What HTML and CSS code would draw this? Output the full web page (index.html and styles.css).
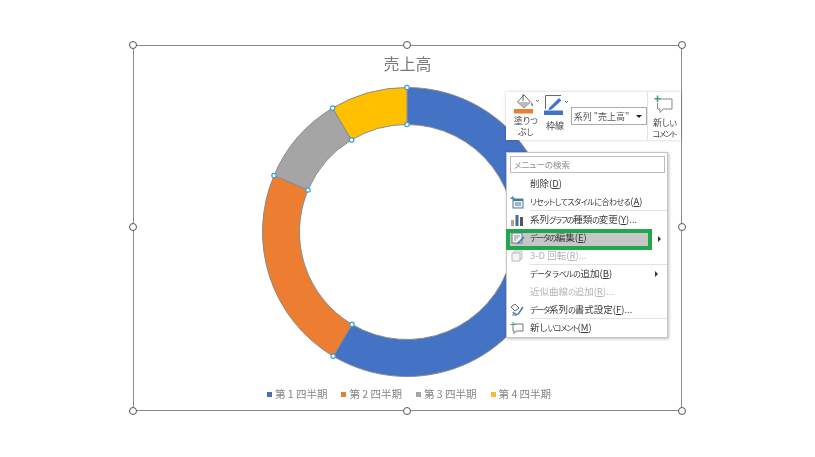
FILE: index.html
```html
<!DOCTYPE html>
<html lang="ja">
<head>
<meta charset="utf-8">
<title>売上高</title>
<link rel="stylesheet" href="styles.css">
</head>
<body>
<div class="stage">
  <section class="chart">
    <span class="handle h-tl"></span><span class="handle h-tc"></span><span class="handle h-tr"></span>
    <span class="handle h-ml"></span><span class="handle h-mr"></span>
    <span class="handle h-bl"></span><span class="handle h-bc"></span><span class="handle h-br"></span>
    <h1 class="chart-title">売上高</h1>
    <svg class="donut" width="296" height="296" viewBox="-148 -148 296 296">
      <g stroke="#8a8a8a" stroke-width="1">
        <path fill="#4472c4" d="M0 -144.5A144.5 144.5 0 1 1 -73.8 124.2L-55 92.4A107.5 107.5 0 1 0 0 -107.5Z"/>
        <path fill="#ed7d31" d="M-73.8 124.2A144.5 144.5 0 0 1 -133 -56.5L-99 -42A107.5 107.5 0 0 0 -55 92.4Z"/>
        <path fill="#a5a5a5" d="M-133 -56.5A144.5 144.5 0 0 1 -74.4 -123.9L-55.4 -92.1A107.5 107.5 0 0 0 -99 -42Z"/>
        <path fill="#ffc000" d="M-74.4 -123.9A144.5 144.5 0 0 1 0 -144.5V-107.5A107.5 107.5 0 0 0 -55.4 -92.1Z"/>
      </g>
      <g fill="#fff" stroke="#3f9fc8" stroke-width="1.2">
        <circle cx="0" cy="-144.5" r="2.2"/><circle cx="0" cy="-107.5" r="2.2"/>
        <circle cx="-74.4" cy="-123.9" r="2.2"/><circle cx="-55.4" cy="-92.1" r="2.2"/>
        <circle cx="-133" cy="-56.5" r="2.2"/><circle cx="-99" cy="-42" r="2.2"/>
        <circle cx="-73.8" cy="124.2" r="2.2"/><circle cx="-55" cy="92.4" r="2.2"/>
      </g>
    </svg>
    <ul class="legend">
      <li><i class="swatch blue"></i>第 1 四半期</li>
      <li><i class="swatch orange"></i>第 2 四半期</li>
      <li><i class="swatch gray"></i>第 3 四半期</li>
      <li><i class="swatch yellow"></i>第 4 四半期</li>
    </ul>
  </section>

  <div class="toolbar">
    <div class="tool tool-fill">
      <svg width="27" height="22" viewBox="0 0 27 22">
        <path d="M12 2 18.500 9 12 15 5.500 9Z" fill="#fff" stroke="#666"/>
        <path d="M5.500 9H18.500L12 15Z" fill="#bbb"/>
        <path d="M11 8V1" stroke="#666" fill="none"/>
        <path d="M19.500 9c1.500 2 1.800 3.500.8 4.500-1-.8-1.300-2.500-.8-4.500Z" fill="#666"/>
        <rect x="2" y="16" width="19" height="4.500" fill="#ed7d31"/>
        <path d="M24 7l1.500 1.500L27 7" fill="none" stroke="#555" stroke-width=".9"/>
      </svg>
      <span class="tool-label">塗り<span class="k">つ</span><br>ぶ<span class="k">し</span></span>
    </div>
    <div class="tool tool-line">
      <svg width="27" height="22" viewBox="0 0 27 22">
        <path d="M2.500 15V1.500H18" fill="none" stroke="#666"/>
        <path d="M6 14 16 4l2.500 2.500L8.500 15.500 5.500 16Z" fill="#4472c4"/>
        <rect x="1" y="16.500" width="19" height="4.500" fill="#4472c4"/>
        <path d="M22 7l1.500 1.500L25 7" fill="none" stroke="#555" stroke-width=".9"/>
      </svg>
      <span class="tool-label">枠線</span>
    </div>
    <div class="series-select"><span>系列 "売上高"</span><i class="caret"></i></div>
    <div class="tool tool-comment">
      <svg class="comment-icon" width="22" height="22" viewBox="0 0 22 22">
        <path d="M8 5H20V15H11L8 18.500V15H5.500V9" fill="#fff" stroke="#888"/>
        <path d="M5.500 1.500V8M2.500 4.700H8.500" stroke="#3f9a7f" stroke-width="1.500"/>
      </svg>
      <span class="tool-label">新し<span class="k">い</span><br><span class="k">コメント</span></span>
    </div>
  </div>

  <nav class="menu">
    <div class="search">メニューの検索</div>
    <div class="item"><span class="label">削除(<u>D</u>)</span></div>
    <div class="item sep">
      <svg class="icon" width="14" height="14" viewBox="0 0 14 14">
        <rect x="3" y="4" width="10" height="9" fill="#e9eef2" stroke="#4f7a90"/>
        <path d="M3 4h10v2H3Z" fill="#4f7a90"/>
        <path d="M5 8h6M5 10h6" stroke="#5b7f95"/>
        <path d="M0 4 2.500 1 5 4Z" fill="#4a90b8"/>
      </svg>
      <span class="label"><span class="k wide">リセットしてスタイルに合わせる</span>(<u>A</u>)</span>
    </div>
    <div class="item">
      <svg class="icon" width="14" height="14" viewBox="0 0 14 14">
        <rect x="1" y="7" width="3" height="6" fill="#c9a074"/>
        <rect x="5.500" y="2" width="3" height="11" fill="#3a6ea5"/>
        <rect x="10" y="4" width="3" height="9" fill="#555"/>
      </svg>
      <span class="label">系列<span class="k">グラフの</span>種類<span class="k">の</span>変更(<u>Y</u>)...</span>
    </div>
    <div class="item active">
      <svg class="icon" width="14" height="14" viewBox="0 0 14 14">
        <rect x="1" y="1" width="10" height="10" fill="#eef1f4" stroke="#6c7c88"/>
        <path d="M3 4h6M3 6h4M3 8h2" stroke="#8a98a3"/>
        <path d="M6 11 12.500 4.500l1 1L7.500 12Z" fill="#3f7fae"/>
      </svg>
      <span class="label"><span class="k">データの</span>編集(<u>E</u>)</span>
      <i class="arrow"></i>
    </div>
    <div class="item disabled sep">
      <svg class="icon" width="14" height="14" viewBox="0 0 14 14">
        <path d="M4 2h8v8H4z" fill="#eee" stroke="#c4c4c4"/>
        <path d="M2 4h8v8H2z" fill="#f4f4f4" stroke="#bbb"/>
      </svg>
      <span class="label">3-D 回転(<u>R</u>)...</span>
    </div>
    <div class="item">
      <span class="label"><span class="k wide">データ ラベルの</span>追加(<u>B</u>)</span>
      <i class="arrow"></i>
    </div>
    <div class="item disabled"><span class="label">近似曲線<span class="k">の</span>追加(<u>R</u>)...</span></div>
    <div class="item sep">
      <svg class="icon" width="14" height="14" viewBox="0 0 14 14">
        <path d="M1 4 5 1l4 4-4 3Z" fill="#fff" stroke="#666"/>
        <path d="M3 9c2 3 5 3 6 1l4-6" fill="none" stroke="#3f7fae" stroke-width="1.500"/>
        <path d="M2 12h5" stroke="#777"/>
      </svg>
      <span class="label"><span class="k">データ</span>系列<span class="k">の</span>書式設定(<u>F</u>)...</span>
    </div>
    <div class="item">
      <svg class="icon" width="14" height="14" viewBox="0 0 14 14">
        <path d="M4 3H13V10H6L4 12.500V10H3V6" fill="#fff" stroke="#777"/>
        <path d="M3 1V6M.5 3.500H5.500" stroke="#3f9a7f"/>
      </svg>
      <span class="label">新し<span class="k">いコメント</span>(<u>M</u>)</span>
    </div>
  </nav>
</div>
</body>
</html>
```
FILE: styles.css
```css
* { box-sizing: border-box; }
html, body { margin: 0; padding: 0; background: #fff; }
body { font-family: "Noto Sans CJK JP", "Liberation Sans", sans-serif; }
.stage { position: relative; width: 815px; height: 457px; overflow: hidden; padding: 45px 0 0 133px; filter: blur(.3px); }
.k { font-size: 8px; letter-spacing: -1.1px; }
.k.wide { letter-spacing: -.5px; }

.chart {
  position: relative; width: 549px; height: 366px; border: 1px solid #8c8c8c;
  display: flex; flex-direction: column; align-items: center;
}
.chart-title { margin: 6px 0 0; height: 22px; font-size: 16px; line-height: 22px; font-weight: 400; color: #7b7b7b; }
.donut { display: block; margin-top: 10px; margin-right: 1px; }
.legend {
  list-style: none; margin: 7px 0 0 3px; padding: 0; display: flex; gap: 14px;
  font-size: 10.5px; line-height: 14px; color: #858585;
}
.legend li { display: flex; align-items: center; gap: 3px; }
.swatch { width: 5px; height: 5px; display: block; }
.blue { background: #4a6fb5; } .orange { background: #e0803c; } .gray { background: #a5a5a5; } .yellow { background: #f2bd33; }

.handle { position: absolute; width: 8px; height: 8px; border-radius: 50%; background: #fff; border: 1.3px solid #555; }
.h-tl { left: -5px; top: -5px; } .h-tc { left: 269px; top: -5px; } .h-tr { right: -5px; top: -5px; }
.h-ml { left: -5px; top: 177px; } .h-mr { right: -5px; top: 177px; }
.h-bl { left: -5px; bottom: -5px; } .h-bc { left: 269px; bottom: -5px; } .h-br { right: -5px; bottom: -5px; }

.toolbar {
  position: absolute; left: 506px; top: 92px; width: 175px; height: 48px; background: #fff;
  box-shadow: 0 0 3px rgba(0,0,0,.22); display: flex; align-items: flex-start;
  font-feature-settings: "palt"; color: #444; font-size: 9px; line-height: 11px;
}
.tool { display: flex; flex-direction: column; align-items: center; text-align: center; }
.tool-label { display: block; }
.tool-fill { width: 29px; margin: 1px 0 0 5px; }
.tool-line { width: 28px; margin: 2px 0 0 4px; }
.tool-line .tool-label { margin: 4px 4px 0 0; }
.series-select {
  width: 78px; height: 18px; margin: 15px 0 0 0; border: 1px solid #aaa; padding-left: 2px;
  display: flex; align-items: center; justify-content: space-between; font-size: 9px; color: #555;
  font-feature-settings: normal;
}
.caret { width: 0; height: 0; margin-right: 4px; border: 3px solid transparent; border-top: 3px solid #222; border-bottom: 0; }
.tool-comment { width: 35px; height: 48px; padding-top: 2px; border-left: 1px solid #e3e3e3; }
.comment-icon { margin-right: 3px; }
.tool-comment .tool-label { margin-top: 1px; }

.menu {
  position: absolute; left: 506px; top: 152px; width: 162px; height: 186px; background: #fff;
  border: 1px solid #c4c4c4; box-shadow: 1px 1px 3px rgba(0,0,0,.25); padding-top: 3px;
  font-size: 9.5px; color: #3a3a3a; font-feature-settings: "palt";
}
.search {
  height: 17px; margin: 0 2px 2px 3px; border: 1px solid #bdbdbd; padding-left: 3px;
  font-size: 8.5px; line-height: 15px; color: #8d8d8d;
}
.item { position: relative; height: 18px; padding-left: 23px; line-height: 17px; white-space: nowrap; }
.item.sep::after { content: ""; position: absolute; left: 23px; right: 0; bottom: 0; height: 1px; background: #e2e2e2; }
.icon { position: absolute; left: 3px; top: 2px; }
.item.disabled { color: #b4b4b4; }
.item.active {
  outline: 4.5px solid #21a84f; margin: 4px 19px 1px 3px; padding-left: 20px;
  background: #c6c6c6; height: 13px; line-height: 9px; z-index: 1;
}
.item.active .icon { left: 1px; top: -1px; }
.item.active .arrow { right: -13px; top: 3px; }
.arrow { position: absolute; right: 9px; top: 6px; width: 0; height: 0; border: 3px solid transparent; border-left: 3px solid #333; border-right: 0; }
```
